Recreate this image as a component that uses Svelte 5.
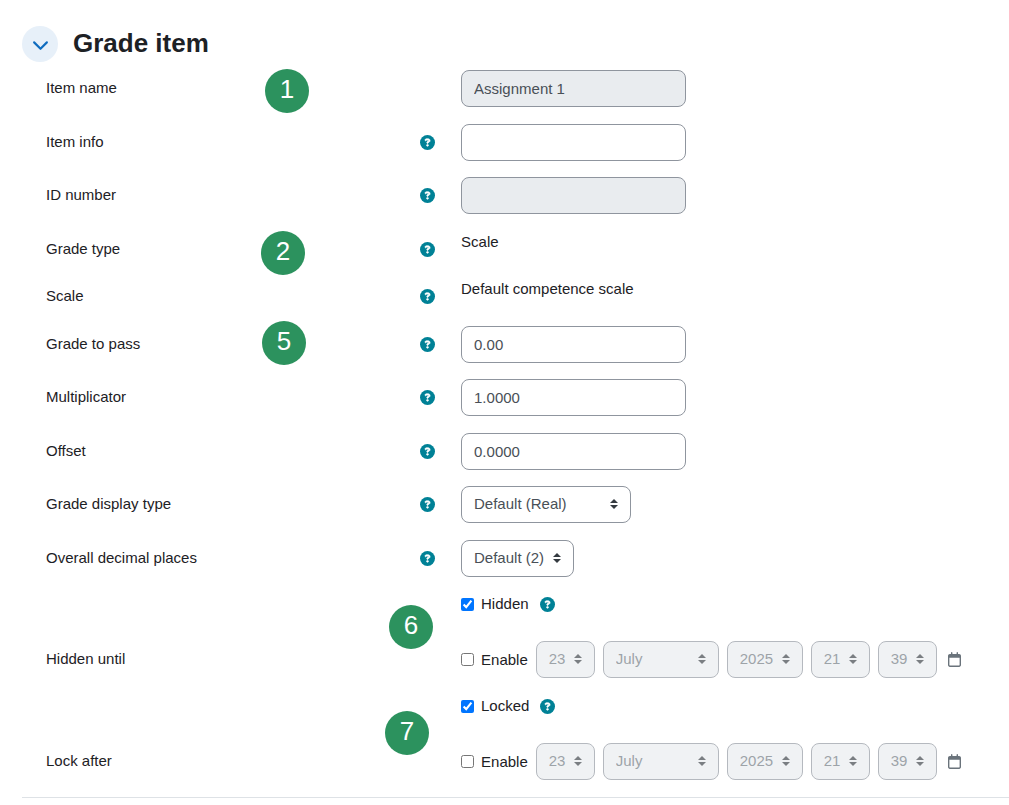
<script>
  let open = $state(true);

  const months = [
    'January', 'February', 'March', 'April', 'May', 'June', 'July',
    'August', 'September', 'October', 'November', 'December'
  ];
  const range = (from, to) =>
    Array.from({ length: to - from + 1 }, (_, i) => String(from + i).padStart(from === 0 ? 2 : 1, '0'));

  const displayTypes = [
    'Default (Real)', 'Real', 'Real (percentage)', 'Real (letter)', 'Percentage',
    'Percentage (real)', 'Percentage (letter)', 'Letter', 'Letter (real)', 'Letter (percentage)'
  ];

  const dateParts = [
    { name: 'Day', value: '23', options: range(1, 31) },
    { name: 'Month', value: 'July', options: months },
    { name: 'Year', value: '2025', options: range(2020, 2030) },
    { name: 'Hour', value: '21', options: range(0, 23) },
    { name: 'Minute', value: '39', options: range(0, 59) }
  ];

  const rows = [
    { id: 'itemname', kind: 'text', label: 'Item name', value: 'Assignment 1', disabled: true, badge: { n: 1, x: 219, y: -1 } },
    { id: 'iteminfo', kind: 'text', label: 'Item info', value: '', help: true },
    { id: 'idnumber', kind: 'text', label: 'ID number', value: '', disabled: true, help: true },
    { id: 'gradetype', kind: 'static', label: 'Grade type', value: 'Scale', help: true, badge: { n: 2, x: 215, y: 0 } },
    { id: 'scale', kind: 'static', label: 'Scale', value: 'Default competence scale', help: true },
    { id: 'gradepass', kind: 'text', label: 'Grade to pass', value: '0.00', help: true, badge: { n: 5, x: 216, y: -5 } },
    { id: 'multfactor', kind: 'text', label: 'Multiplicator', value: '1.0000', help: true },
    { id: 'plusfactor', kind: 'text', label: 'Offset', value: '0.0000', help: true },
    { id: 'display', kind: 'select', label: 'Grade display type', value: 'Default (Real)', options: displayTypes, help: true },
    { id: 'decimals', kind: 'select', label: 'Overall decimal places', value: 'Default (2)', options: ['Default (2)', '0', '1', '2', '3', '4', '5'], help: true },
    { id: 'hidden', kind: 'check', text: 'Hidden', badge: { n: 6, x: 343, y: 12 } },
    { id: 'hiddenuntil', kind: 'date', label: 'Hidden until' },
    { id: 'locked', kind: 'check', text: 'Locked', badge: { n: 7, x: 339, y: 16 } },
    { id: 'locktime', kind: 'date', label: 'Lock after' }
  ];
</script>

{#snippet helpIcon(name)}
  <button type="button" class="help" aria-label={`Help with ${name}`}>
    <svg viewBox="0 0 512 512" aria-hidden="true">
      <circle cx="256" cy="256" r="256" fill="#008196" />
      <path fill="#fff" stroke="#fff" stroke-width="22" d="M169.8 165.3c7.9-22.3 29.1-37.3 52.8-37.3h58.3c34.9 0 63.1 28.3 63.1 63.1c0 22.6-12.1 43.5-31.7 54.8L280 264.4c-.2 13-10.9 23.6-24 23.6c-13.3 0-24-10.7-24-24V250.5c0-8.6 4.6-16.5 12.1-20.8l44.3-25.4c4.7-2.7 7.6-7.7 7.6-13.1c0-8.4-6.8-15.1-15.1-15.1H222.6c-3.4 0-6.4 2.1-7.5 5.3l-.4 1.2c-4.4 12.5-18.2 19-30.6 14.6s-19-18.2-14.6-30.6l.4-1.2zM224 352a32 32 0 1 1 64 0 32 32 0 1 1 -64 0z" />
    </svg>
  </button>
{/snippet}

<form class="section">
  <header>
    <button type="button" class="toggle" aria-label="Collapse Grade item" aria-expanded={open} onclick={() => (open = !open)}>
      <svg viewBox="0 0 16 16" aria-hidden="true" class:closed={!open}>
        <path d="M2 6l6 6 6-6" fill="none" stroke="#0f6cbf" stroke-width="2" stroke-linecap="round" stroke-linejoin="round" />
      </svg>
    </button>
    <h3>Grade item</h3>
  </header>

  {#if open}
    <div class="rows">
      {#each rows as row (row.id)}
        <div class="row">
          <div class="name">
            {#if row.kind === 'static' || row.kind === 'date'}
              <span id={`${row.id}-label`}>{row.label}</span>
            {:else if row.label}
              <label for={row.id}>{row.label}</label>
            {/if}
            {#if row.help}{@render helpIcon(row.label)}{/if}
          </div>

          <div class="control">
            {#if row.kind === 'text'}
              <input class="field" type="text" id={row.id} value={row.value} disabled={row.disabled} />
            {:else if row.kind === 'static'}
              <span aria-labelledby={`${row.id}-label`}>{row.value}</span>
            {:else if row.kind === 'select'}
              <select id={row.id} value={row.value}>
                {#each row.options as option}<option>{option}</option>{/each}
              </select>
            {:else if row.kind === 'check'}
              <label class="check"><input type="checkbox" id={row.id} checked />{row.text}</label>
              {@render helpIcon(row.text)}
            {:else}
              <div class="date" role="group" aria-labelledby={`${row.id}-label`}>
                <label class="check"><input type="checkbox" id={row.id} />Enable</label>
                {#each dateParts as part}
                  <select aria-label={part.name} value={part.value} disabled>
                    {#each part.options as option}<option>{option}</option>{/each}
                  </select>
                {/each}
                <button type="button" class="calendar" aria-label="Calendar">
                  <svg viewBox="0 0 448 512" aria-hidden="true">
                    <path fill="#6a737b" d="M152 24c0-13.3-10.7-24-24-24s-24 10.7-24 24V64H64C28.7 64 0 92.7 0 128v16 48V448c0 35.3 28.7 64 64 64H384c35.3 0 64-28.7 64-64V192 144 128c0-35.3-28.7-64-64-64H344V24c0-13.3-10.7-24-24-24s-24 10.7-24 24V64H152V24zM48 192H400V448c0 8.800-7.200 16-16 16H64c-8.800 0-16-7.200-16-16V192z" />
                  </svg>
                </button>
              </div>
            {/if}
          </div>

          {#if row.badge}
            <span class="badge" style:left={`${row.badge.x}px`} style:top={`${row.badge.y}px`}>{row.badge.n}</span>
          {/if}
        </div>
      {/each}
    </div>
  {/if}
</form>

<style>
  :global(body) {
    margin: 0;
    background: #fff;
  }

  .section {
    margin-left: 22px;
    padding-top: 26px;
    border-bottom: 1px solid #dee2e6;
    color: #1d2125;
    font: 15px/22px "Liberation Sans", Arial, sans-serif;
  }

  header {
    display: flex;
    align-items: center;
    gap: 15px;
    margin-bottom: 8px;
  }

  h3 {
    margin: 0;
    padding-bottom: 2px;
    font-size: 26px;
    line-height: 32px;
  }

  button {
    padding: 0;
    border: 0;
    background: none;
    cursor: pointer;
  }

  svg {
    display: block;
  }

  .toggle {
    display: grid;
    place-items: center;
    width: 36px;
    height: 36px;
    border-radius: 50%;
    background: #e7f0f9;
  }

  .toggle svg {
    width: 17px;
    height: 17px;
  }

  .toggle .closed {
    transform: rotate(-90deg);
  }

  .rows {
    padding-left: 24px;
  }

  .row {
    position: relative;
    display: grid;
    grid-template-columns: minmax(0, 71fr) minmax(0, 100fr);
    column-gap: 26px;
    min-height: 31px;
    padding-bottom: 16px;
  }

  .row:nth-child(odd) {
    padding-bottom: 17px;
  }

  .name {
    display: flex;
    justify-content: space-between;
    align-items: flex-start;
    padding-top: 7px;
  }

  .name .help {
    margin-top: 4px;
  }

  .help svg {
    width: 15px;
    height: 15px;
  }

  .control {
    display: flex;
    align-items: center;
    align-self: start;
    gap: 11px;
  }

  .field,
  select {
    box-sizing: border-box;
    height: 37px;
    margin: 0;
    border: 1px solid #8f959e;
    border-radius: 8px;
    background-color: #fff;
    color: #495057;
    font: inherit;
  }

  .field {
    width: 225px;
    padding: 6px 12px 7px;
  }

  .field:disabled {
    background-color: #e9ecef;
  }

  select {
    appearance: none;
    padding: 6px 28px 7px 12px;
    background-image: url("data:image/svg+xml,%3csvg xmlns='http://www.w3.org/2000/svg' width='4' height='5' viewBox='0 0 4 5'%3e%3cpath fill='%23343a40' d='M2 0L0 2h4zm0 5L0 3h4z'/%3e%3c/svg%3e");
    background-repeat: no-repeat;
    background-position: right 12px top 12px;
    background-size: 8px 10px;
  }

  select:disabled {
    background-color: #e9ecef;
    color: #6a737b;
    opacity: 0.65;
  }

  .check {
    display: flex;
    align-items: center;
    gap: 7px;
  }

  .check input {
    width: 13px;
    height: 13px;
    margin: 0;
    accent-color: #0075ff;
  }

  .date {
    display: flex;
    align-items: center;
    gap: 8px;
    padding-bottom: 1px;
  }

  .calendar {
    margin-left: 3px;
  }

  .calendar svg {
    width: 13px;
    height: 15px;
  }

  .badge {
    position: absolute;
    width: 44px;
    height: 44px;
    border-radius: 50%;
    background: #2c925e;
    color: #fff;
    font-size: 26px;
    line-height: 40px;
    text-align: center;
  }
</style>
